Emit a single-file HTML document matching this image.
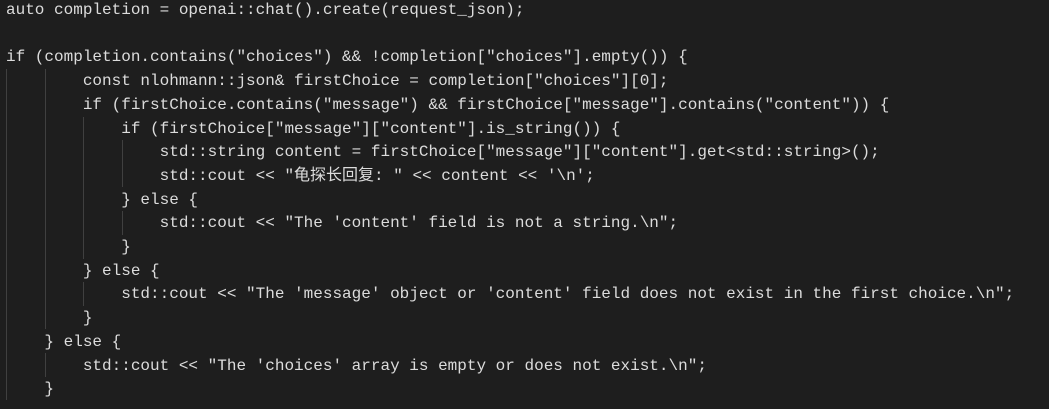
<!DOCTYPE html>
<html><head><meta charset="utf-8"><style>
html,body{margin:0;padding:0;background:#1e1e1e;width:1049px;height:409px;overflow:hidden}
pre{position:absolute;left:6px;top:-1px;margin:0;font-family:"Liberation Mono","Noto Sans CJK SC",monospace;font-size:16px;line-height:23.7px;color:#dcdcdc;white-space:pre}
.g{position:absolute;width:1px;background:#404040}
</style></head><body>
<div class="g" style="left:6px;top:69px;height:331px"></div>
<div class="g" style="left:45px;top:69px;height:260px"></div>
<div class="g" style="left:45px;top:353px;height:23.7px"></div>
<div class="g" style="left:83px;top:116.5px;height:142px"></div>
<div class="g" style="left:83px;top:282px;height:23.7px"></div>
<div class="g" style="left:122px;top:140px;height:47.4px"></div>
<div class="g" style="left:122px;top:211px;height:23.7px"></div>
<pre>auto completion = openai::chat().create(request_json);

if (completion.contains("choices") &amp;&amp; !completion["choices"].empty()) {
        const nlohmann::json&amp; firstChoice = completion["choices"][0];
        if (firstChoice.contains("message") &amp;&amp; firstChoice["message"].contains("content")) {
            if (firstChoice["message"]["content"].is_string()) {
                std::string content = firstChoice["message"]["content"].get&lt;std::string&gt;();
                std::cout &lt;&lt; "龟探长回复: " &lt;&lt; content &lt;&lt; '\n';
            } else {
                std::cout &lt;&lt; "The 'content' field is not a string.\n";
            }
        } else {
            std::cout &lt;&lt; "The 'message' object or 'content' field does not exist in the first choice.\n";
        }
    } else {
        std::cout &lt;&lt; "The 'choices' array is empty or does not exist.\n";
    }</pre>
</body></html>
